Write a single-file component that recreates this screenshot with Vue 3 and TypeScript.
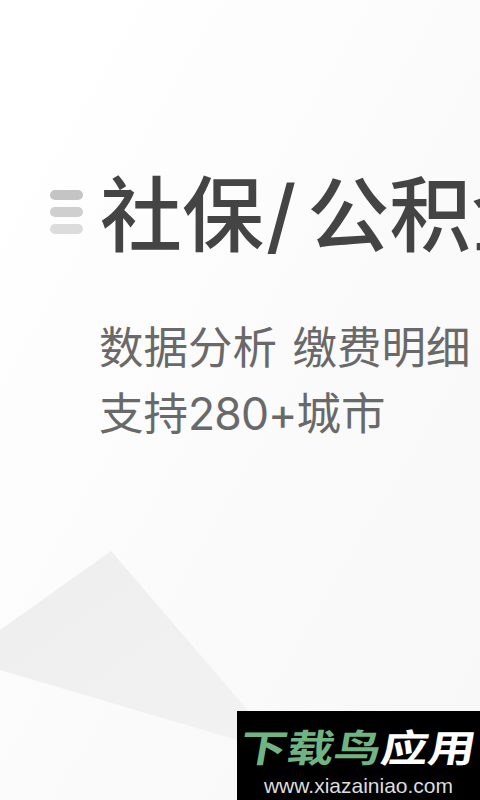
<script setup lang="ts">
const city = { lead: '支持', count: '280+', tail: '城市' }
const detail = '数据分析 缴费明细'
</script>

<template>
  <main class="page">
    <svg class="backdrop" width="480" height="800" viewBox="0 0 480 800" aria-hidden="true">
      <defs>
        <linearGradient id="facet" x1="0" y1="0" x2="1" y2="1">
          <stop offset="0" stop-color="#eeeeee" />
          <stop offset="1" stop-color="#f2f2f2" />
        </linearGradient>
      </defs>
      <polygon points="111,551 0,630 0,670 237,740 270,740 245,707" fill="url(#facet)" />
    </svg>

    <section class="content">
      <div class="headline">
        <div class="menu" aria-hidden="true">
          <span class="bar bar-a"></span>
          <span class="bar bar-b"></span>
          <span class="bar bar-c"></span>
        </div>
        <h1 class="title">社保<span class="slash">/</span>公积金</h1>
      </div>
      <div class="copy">
        <p class="line">{{ detail }}</p>
        <p class="line">{{ city.lead }}<span class="count">{{ city.count }}</span>{{ city.tail }}</p>
      </div>
    </section>

    <aside class="stamp">
      <div class="brand">
        <span class="green">下载鸟</span><span class="white">应用</span>
      </div>
      <div class="url">www.xiazainiao.com</div>
    </aside>
  </main>
</template>

<style scoped>
.page {
  position: relative;
  width: 480px;
  height: 800px;
  overflow: hidden;
  font-family: Inter, "Noto Sans CJK SC", sans-serif;
  background: linear-gradient(120deg, #ffffff 8%, #fdfdfd 30%, #fbfbfb 50%, #f9f9f9 72%, #f8f8f8 100%);
}
.backdrop {
  position: absolute;
  inset: 0;
}
.content {
  position: relative;
  padding-top: 157px;
  width: 700px;
}
.headline {
  display: flex;
  align-items: center;
  gap: 17px;
  padding-left: 50px;
}
.menu {
  display: flex;
  flex-direction: column;
  gap: 7px;
  margin-top: -9px;
}
.bar {
  display: block;
  width: 33px;
  height: 10px;
  border-radius: 5px;
}
.bar-a { background: #c4c4c4; }
.bar-b { background: #cfcfcf; }
.bar-c { background: #dcdcdc; }
.title {
  margin: 0;
  font-size: 82px;
  line-height: 118px;
  font-weight: 500;
  color: #444;
  white-space: nowrap;
}
.slash {
  margin: 0 11px 0 2px;
}
.copy {
  margin-top: 40px;
  padding-left: 99px;
}
.line {
  margin: 0;
  font-size: 44.5px;
  line-height: 66px;
  color: #696969;
  white-space: nowrap;
  word-spacing: 3px;
}
.count {
  letter-spacing: -0.9px;
}
.stamp {
  position: absolute;
  left: 237px;
  top: 711px;
  width: 243px;
  height: 89px;
  background: #000;
  display: flex;
  flex-direction: column;
  align-items: center;
}
.brand {
  margin-top: 13px;
  font-size: 38px;
  line-height: 48px;
  font-weight: 700;
  white-space: nowrap;
  transform: scaleX(1.24) skewX(-8deg);
}
.green { color: #6fb482; }
.white { color: #fff; }
.url {
  margin-top: 3px;
  font-family: "Liberation Sans", sans-serif;
  font-size: 21px;
  line-height: 22px;
  color: #ddd;
  white-space: nowrap;
}
</style>
